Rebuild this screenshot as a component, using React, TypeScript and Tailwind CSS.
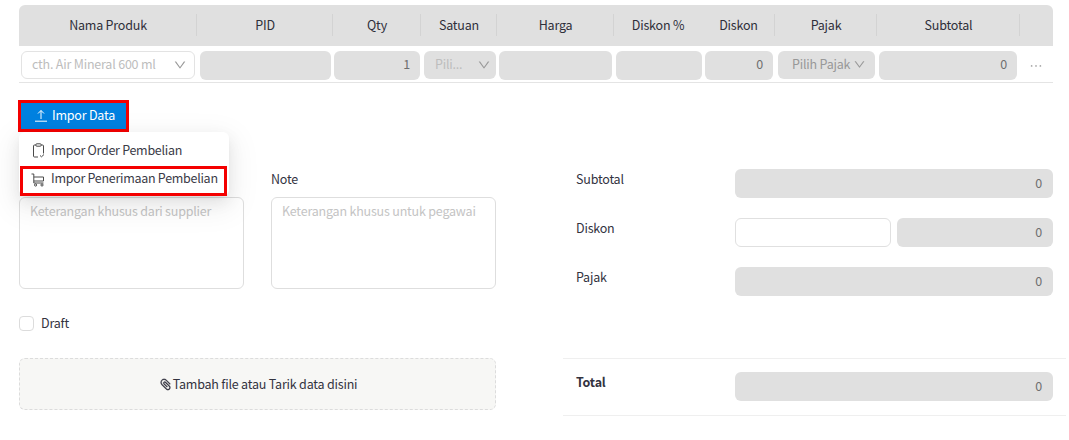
import React from "react";
import { AiOutlinePaperClip, AiOutlineDown, AiOutlineEllipsis } from "react-icons/ai";

const ro = "h-[29px] rounded-md bg-[#e0e0e0] flex items-center justify-end pb-[2px] text-[12.5px] text-[#6f6f6f]";
const cols = "grid grid-cols-[178px_136px_88px_76px_117px_88px_73px_102px_143px_33px]";

function Head({ children, line = true }: { children: React.ReactNode; line?: boolean }) {
  return (
    <div className="relative flex items-center justify-center h-[41px] text-[12.5px] text-[#2f2f3a]">
      {children}
      {line && <span className="absolute right-0 top-[9px] h-[22px] w-px bg-[#d3d3d3]" />}
    </div>
  );
}

function UploadIcon() {
  return (
    <svg width="12" height="13" viewBox="0 0 12 13" fill="none" stroke="#fff" strokeWidth="1">
      <path d="M6 10V1.5" />
      <path d="M3 4.5L6 1.5l3 3" />
      <path d="M0 12.2h12" />
    </svg>
  );
}

function ClipIcon() {
  return (
    <svg width="13" height="15" viewBox="0 0 13 15" fill="none" stroke="#4a4a4a" strokeWidth="1">
      <rect x="4" y="0.8" width="5" height="2.4" rx="0.6" />
      <path d="M4 2H2.5A1 1 0 0 0 1.5 3v10a1 1 0 0 0 1 1H6M9 2h1.5a1 1 0 0 1 1 1V10.5" />
      <path d="M8 12.5l1.5 1.3 2.5-2.3" />
    </svg>
  );
}

function CartIcon() {
  return (
    <svg width="14" height="14" viewBox="0 0 14 14" fill="none" stroke="#4a4a4a" strokeWidth="1">
      <path d="M0.5 1H2.8V10H12.5" />
      <path d="M2.8 4H12.5V8H2.8" />
      <circle cx="4.6" cy="12" r="1.1" />
      <circle cx="11" cy="12" r="1.1" />
    </svg>
  );
}

function Row({ label, bold, children }: { label: string; bold?: boolean; children: React.ReactNode }) {
  return (
    <div className="flex items-start">
      <div className={`w-[172px] pl-[13px] leading-[20px] text-[12.5px] text-[#33333f] ${bold ? "font-bold" : ""}`}>{label}</div>
      <div className="flex-1">{children}</div>
    </div>
  );
}

function ReadOnly() {
  return <div className="h-[29px] rounded-md bg-[#e0e0e0] flex items-center justify-end pr-[11px] text-[12.5px] text-[#6f6f6f]">0</div>;
}

export default function App() {
  return (
    <div
      className="relative w-[1069px] h-[440px] overflow-hidden bg-white pt-[5px] pl-[19px] whitespace-nowrap tracking-[-0.2px]"
      style={{ fontFamily: '"Noto Sans CJK SC", "Noto Sans", sans-serif' }}
    >
      <div className="w-[1034px]">
        <div className={`${cols} bg-[#e0e0e0] rounded-t-md`}>
          <Head>Nama Produk</Head>
          <Head>PID</Head>
          <Head>Qty</Head>
          <Head>Satuan</Head>
          <Head>Harga</Head>
          <Head line={false}>Diskon %</Head>
          <Head>Diskon</Head>
          <Head>Pajak</Head>
          <Head>Subtotal</Head>
          <Head line={false}>{""}</Head>
        </div>
        <div className={`${cols} h-[37px] pt-[5px] border-b border-[#e4e4e4]`}>
          <div className="pl-[2px] pr-[2px]">
            <div className="h-[28px] rounded-md border border-[#e3e3e3] flex items-center justify-between pl-[10px] pr-[7px] pb-[1px] text-[12.5px] text-[#bdbdbd]">
              <span>cth. Air Mineral 600 ml</span>
              <AiOutlineDown className="text-[#999] text-[14px]" />
            </div>
          </div>
          <div className="pl-[3px] pr-[2px]"><div className={ro} /></div>
          <div className="pl-[1px] pr-[1px]"><div className={`${ro} pr-[10px]`}>1</div></div>
          <div className="pl-[3px] pr-[1px]">
            <div className="h-[28px] rounded-md bg-[#e0e0e0] flex items-center justify-between pl-[11px] pr-[5px] pb-[1px] text-[12.5px] text-[#bdbdbd]">
              <span>Pili...</span>
              <AiOutlineDown className="text-[#999] text-[14px]" />
            </div>
          </div>
          <div className="pl-[2px] pr-[2px]"><div className={ro} /></div>
          <div className="pl-[2px] pr-[0px]"><div className={ro} /></div>
          <div className="pl-[3px] pr-[2px]"><div className={`${ro} pr-[10px]`}>0</div></div>
          <div className="pl-[3px] pr-[2px]">
            <div className="h-[28px] rounded-md bg-[#e0e0e0] flex items-center justify-between pl-[14px] pr-[9px] pb-[1px] text-[12.5px] text-[#989898]">
              <span>Pilih Pajak</span>
              <AiOutlineDown className="text-[#999] text-[13px]" />
            </div>
          </div>
          <div className="pl-[2px] pr-[3px]"><div className={`${ro} pr-[10px]`}>0</div></div>
          <div className="flex items-center justify-center h-[29px] pr-[2px] text-[#a8a8a8]">
            <AiOutlineEllipsis className="text-[16px]" />
          </div>
        </div>
      </div>

      <button className="mt-[17px] -ml-[1px] w-[111px] h-[32px] border-[3px] border-[#f40000] bg-[#0081e0] text-white text-[12.5px] flex items-center justify-center gap-[5px] pl-[3px] pb-[2px]">
        <UploadIcon />
        <span>Impor Data</span>
      </button>

      <div className="flex mt-[37px]">
        <div className="w-[477px]">
          <div className="flex gap-[27px]">
            <div className="w-[225px]">
              <div className="h-[20px] leading-[20px] text-[12.5px] text-[#33333f]">Memo</div>
              <div className="mt-[8px] h-[92px] rounded-md border border-[#dedede] px-[10px] py-[4px] text-[12.5px] text-[#c4c4c4]">Keterangan khusus dari supplier</div>
            </div>
            <div className="w-[225px]">
              <div className="h-[20px] leading-[20px] text-[12.5px] text-[#33333f]">Note</div>
              <div className="mt-[8px] h-[92px] rounded-md border border-[#dedede] px-[10px] py-[4px] text-[12.5px] text-[#c4c4c4]">Keterangan khusus untuk pegawai</div>
            </div>
          </div>
          <div className="mt-[27px] flex items-center h-[14px] gap-[7px] text-[12.5px] text-[#33333f]">
            <span className="size-[15px] rounded-[4px] border border-[#dcdcdc]" />
            <span>Draft</span>
          </div>
          <div className="mt-[28px] h-[52px] rounded-md border border-dashed border-[#dcdcdc] bg-[#f7f7f5] flex items-center justify-center text-[12.5px] text-[#33333f]">
            <AiOutlinePaperClip className="text-[15px] -scale-x-100 stroke-[16] stroke-[#33333f]" />
            <span>Tambah file atau Tarik data disini</span>
          </div>
        </div>
        <div className="ml-[67px] w-[503px]">
          <div className="flex flex-col gap-[20px] pr-[13px]">
            <Row label="Subtotal"><ReadOnly /></Row>
            <Row label="Diskon">
              <div className="grid grid-cols-2 gap-[6px]">
                <div className="h-[29px] rounded-md border border-[#e0e0e0]" />
                <ReadOnly />
              </div>
            </Row>
            <Row label="Pajak"><ReadOnly /></Row>
          </div>
          <div className="mt-[62px] border-t border-b border-[#efefef] pt-[13px] h-[58px] pr-[13px]">
            <Row label="Total" bold><ReadOnly /></Row>
          </div>
        </div>
      </div>

      <div className="absolute left-[19px] top-[132px] w-[210px] h-[64px] rounded-md bg-white pl-[1px] pt-[5px] tracking-[-0.28px] shadow-[0_3px_6px_-4px_rgba(0,0,0,0.12),0_6px_16px_0_rgba(0,0,0,0.08),0_9px_28px_8px_rgba(0,0,0,0.05)]">
        <div className="h-[29px] flex items-center pl-[12px] gap-[6px] pb-[2px] text-[12.5px] text-[#3b3b47]">
          <ClipIcon />
          <span>Impor Order Pembelian</span>
        </div>
        <div className="h-[30px] w-[207px] flex items-center pl-[8px] gap-[6px] pb-[3px] border-[3px] border-[#f40000] text-[12.5px] text-[#3b3b47]">
          <CartIcon />
          <span className="-mt-[2px]">Impor Penerimaan Pembelian</span>
        </div>
      </div>
    </div>
  );
}
